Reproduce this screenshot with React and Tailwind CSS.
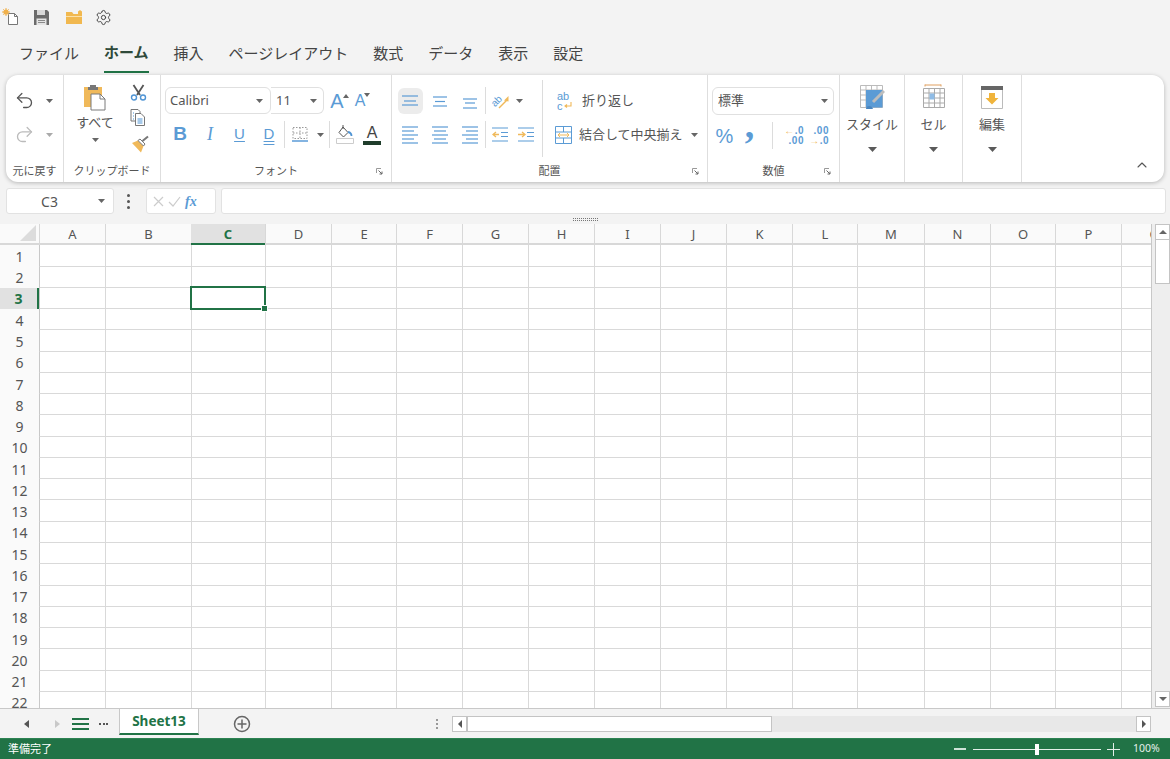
import { ChevronUp, Settings, Undo2, Redo2 } from "lucide-react";

const FONT = "font-['Noto_Sans','Noto_Sans_CJK_JP',sans-serif]";

const TABS = ["ファイル", "ホーム", "挿入", "ページレイアウト", "数式", "データ", "表示", "設定"];
const COLS = ["A", "B", "C", "D", "E", "F", "G", "H", "I", "J", "K", "L", "M", "N", "O", "P", "Q"];
const ROWS = Array.from({ length: 22 }, (_, i) => i + 1);

/* ---------------- Small icons ---------------- */
const Caret = ({ color = "#666", className = "" }) => (
  <svg width="7" height="4" viewBox="0 0 7 4" className={className}>
    <path d="M0 0h7L3.500 4z" fill={color} />
  </svg>
);

const BigCaret = () => (
  <svg width="9" height="5" viewBox="0 0 9 5">
    <path d="M0 0h9L4.500 5z" fill="#5a5a5a" />
  </svg>
);

const NewFile = () => (
  <svg width="18" height="18" viewBox="0 0 18 18">
    <path d="M6.500 5.500h6l3 3v8h-9z" fill="#fff" stroke="#777" />
    <path d="M12.500 5.500v3h3" fill="none" stroke="#777" />
    <circle cx="4" cy="4" r="2.600" fill="#f0b04a" />
    <path d="M4 0v8M0 4h8M1.300 1.300l5.400 5.400M6.700 1.300L1.300 6.700" stroke="#f0b04a" />
  </svg>
);

const Save = () => (
  <svg width="17" height="17" viewBox="0 0 17 17">
    <path d="M1 1h13l2 2v13H1z" fill="#6b6b6b" />
    <path d="M4 1h8v5H4z" fill="#d8d8d8" />
    <path d="M3.500 9.500h10V16h-10z" fill="#e4e4e4" />
    <path d="M5 11.500h7M5 13.500h7" stroke="#8a8a8a" />
  </svg>
);

const Folder = () => (
  <svg width="18" height="16" viewBox="0 0 18 16">
    <path d="M1 3h6l1.500 2H13V2.500L15 1l2 1.500V5v10H1z" fill="#f1b84f" />
    <path d="M1 7h16v1H1z" fill="#fbe0a8" />
  </svg>
);

const Clipboard = () => (
  <svg width="22" height="27" viewBox="0 0 22 27">
    <path d="M0 3h18v20H0z" fill="#f0b95a" />
    <path d="M6 3h6V1H6z" fill="#777" />
    <path d="M4 3h10v3H4z" fill="#777" />
    <path d="M7 10h9l5 5v11H7z" fill="#fff" stroke="#7a7a7a" />
    <path d="M16 10v5h5" fill="none" stroke="#7a7a7a" />
  </svg>
);

const ScissorsIcon = () => (
  <svg width="17" height="17" viewBox="0 0 17 17">
    <path d="M3.500 1l6.500 10M13.500 1L7 11" stroke="#555" strokeWidth="1.800" fill="none" />
    <circle cx="4" cy="13.500" r="2.500" fill="none" stroke="#4f94d4" strokeWidth="1.400" />
    <circle cx="13" cy="13.500" r="2.500" fill="none" stroke="#4f94d4" strokeWidth="1.400" />
  </svg>
);

const CopyIcon = () => (
  <svg width="16" height="17" viewBox="0 0 16 17">
    <path d="M1 .5h7l2 2V12H1z" fill="#fff" stroke="#777" />
    <path d="M5.500 4.500H11l3.500 3.500v8.500h-9z" fill="#fff" stroke="#777" />
    <path d="M3 4h1M3 7h1M3 10h1" stroke="#4f94d4" />
    <path d="M7.500 10h5M7.500 12h5M7.500 14h5" stroke="#4f94d4" />
  </svg>
);

const BrushIcon = () => (
  <svg width="18" height="18" viewBox="0 0 18 18">
    <path d="M0 8l6-2.500L11.500 11 9 17.500z" fill="#f0b95a" />
    <path d="M6 5.500L11.500 11l1.500-2L8 4z" fill="#fff" stroke="#777" />
    <path d="M10.500 6L16 1.500" stroke="#777" strokeWidth="2" />
  </svg>
);

const BorderIcon = () => (
  <svg width="16" height="17" viewBox="0 0 16 17">
    <path d="M1 1.500h14v11H1zM8 1.500v11M1 7h14" fill="none" stroke="#999" strokeDasharray="1.500 1.500" />
    <path d="M0 15h16" stroke="#4f94d4" strokeWidth="1.400" />
  </svg>
);

const FillIcon = () => (
  <svg width="18" height="19" viewBox="0 0 18 19">
    <path d="M7 2l5 5.500L7.500 12 3 7.500z" fill="#fff" stroke="#555" />
    <path d="M7 0v4" stroke="#555" />
    <path d="M12 7c2.500.500 3.500 2 3.500 4" fill="none" stroke="#4f94d4" strokeWidth="1.800" />
    <path d="M.5 13.500h17v5H.5z" fill="#fff" stroke="#ccc" />
  </svg>
);

const AlignLines = ({ lines, color = "#5b9bd5" }) => (
  <svg width="18" height="18" viewBox="0 0 18 18">
    {lines.map(([x1, x2, y]) => (
      <path key={y} d={`M${x1} ${y}H${x2}`} stroke={color} strokeWidth="1.200" />
    ))}
  </svg>
);

const OrientIcon = () => (
  <svg width="20" height="20" viewBox="0 0 20 20">
    <text x="1" y="13" transform="rotate(-45 7 10)" fontSize="10" fill="#5b9bd5" fontFamily="Liberation Sans">ab</text>
    <path d="M9 17L17 9" stroke="#f0b95a" strokeWidth="1.500" />
    <path d="M18.500 5v5.500l-4.500-1z" fill="#f0b95a" />
  </svg>
);

const IndentIcon = ({ right }) => (
  <svg width="16" height="16" viewBox="0 0 16 16">
    <path d="M0 1h16M9 5.500h7M9 9.500h7M0 14h16" stroke="#5b9bd5" strokeWidth="1.200" />
    {right ? (
      <path d="M0 7.500h6M4 5l3 2.500L4 10" stroke="#f0b95a" strokeWidth="1.300" fill="none" />
    ) : (
      <path d="M1 7.500h6M4 5L1 7.500 4 10" stroke="#f0b95a" strokeWidth="1.300" fill="none" />
    )}
  </svg>
);

const WrapIcon = () => (
  <svg width="16" height="20" viewBox="0 0 16 20">
    <text x="0" y="8.500" fontSize="11" fill="#5b9bd5" fontFamily="Liberation Sans">ab</text>
    <text x="0" y="18.500" fontSize="11" fill="#5b9bd5" fontFamily="Liberation Sans">c</text>
    <path d="M14 11v4H8.500M10 13.500L8 15l2 1.500" stroke="#f0b95a" strokeWidth="1.100" fill="none" />
  </svg>
);

const MergeIcon = () => (
  <svg width="17" height="18" viewBox="0 0 17 18">
    <path d="M.5.500h16v17H.5z" fill="none" stroke="#5b9bd5" />
    <path d="M.5 6h16M.5 12h16M8.500.500V6M8.500 12v5.500" stroke="#5b9bd5" />
    <path d="M3 9h11M5 7l-2 2 2 2M12 7l2 2-2 2" stroke="#f0b95a" fill="none" />
  </svg>
);

const Launcher = () => (
  <svg width="7" height="7" viewBox="0 0 7 7">
    <path d="M.5 5V.5H5" stroke="#999" fill="none" />
    <path d="M2.500 2.500L6 6M6 3.500V6H3.500" stroke="#666" fill="none" />
  </svg>
);

const StyleIcon = () => (
  <svg width="26" height="26" viewBox="0 0 26 26">
    <path d="M1.500 1.500h22v22h-22zM1.500 6h22M1.500 11h22M1.500 16h22M7 1.500v22M12.500 1.500v22M18 1.500v22" fill="none" stroke="#bbb" />
    <path d="M7 6h16.500v17.500H7z" fill="#5b9bd5" />
    <path d="M7 25c0-4 6-4 7 0z" fill="#4a86c0" />
    <path d="M14 18L25 7" stroke="#bdbdbd" strokeWidth="3" />
  </svg>
);

const CellIcon = () => (
  <svg width="24" height="26" viewBox="0 0 24 26">
    <path d="M3 1h16M3 .5v2M19 .5v2" stroke="#e0a060" />
    <path d="M1.500 4.500h21v19h-21zM1.500 9h21M1.500 14h21M1.500 19h21M7 4.500v19M12.500 4.500v19M18 4.500v19" fill="none" stroke="#aaa" />
    <path d="M7.500 9.500h5v6h-5z" fill="#8fbce6" />
  </svg>
);

const EditIcon = () => (
  <svg width="22" height="23" viewBox="0 0 22 23">
    <path d="M.5.500h21v22H.5z" fill="#fff" stroke="#bbb" />
    <path d="M0 0h22v4H0z" fill="#666" />
    <path d="M8 7h6v5h3.500L11 18.500 4.500 12H8z" fill="#f0b43c" />
  </svg>
);

/* ---------------- Ribbon parts ---------------- */
const Divider = () => <div className="w-px h-[27px] bg-[#dcdcdc]" />;

const Cell = ({ className = "w-[30px]", children }) => (
  <div className={`${className} h-[27px] flex items-center justify-center shrink-0`}>{children}</div>
);

const GroupLabel = ({ text, launcher }) => (
  <div className="h-[22px] flex items-center justify-center relative text-[11px] text-[#555]">
    {text}
    {launcher && (
      <span className="absolute right-[8px] top-[8px] flex">
        <Launcher />
      </span>
    )}
  </div>
);

const BigButton = ({ className, icon, label }) => (
  <div className={`${className} h-full border-r border-[#dedede] flex flex-col items-center pt-[9px] shrink-0`}>
    <div className="h-[26px] flex items-center">{icon}</div>
    <div className="mt-[5px] h-[18px] leading-[18px] text-[13px] text-[#555]">{label}</div>
    <div className="mt-[14px]">
      <BigCaret />
    </div>
  </div>
);

const Ribbon = () => (
  <div className="mx-[6px] h-[107px] shrink-0 rounded-xl bg-white shadow-[0_1px_4px_rgba(0,0,0,0.25)] flex">
    {/* Undo */}
    <div className="w-[58px] border-r border-[#dedede] flex flex-col shrink-0">
      <div className="flex-1 pt-[12px] pl-[8px] flex flex-col gap-[7px]">
        <div className="h-[27px] flex items-center gap-[11px]">
          <Undo2 className="w-[21px] h-[21px] text-[#555]" strokeWidth={1.5} />
          <Caret />
        </div>
        <div className="h-[27px] flex items-center gap-[11px]">
          <Redo2 className="w-[21px] h-[21px] text-[#bbb]" strokeWidth={1.5} />
          <Caret color="#aaa" />
        </div>
      </div>
      <GroupLabel text="元に戻す" />
    </div>

    {/* Clipboard */}
    <div className="w-[97px] border-r border-[#dedede] flex flex-col shrink-0">
      <div className="flex-1 flex">
        <div className="w-[62px] flex flex-col items-center pt-[9px]">
          <Clipboard />
          <div className="mt-[1px] text-[13px] leading-[20px] text-[#555]">すべて</div>
          <div className="mt-[6px]">
            <Caret />
          </div>
        </div>
        <div className="flex-1 flex flex-col items-center pt-[9px] pr-[10px] gap-[8px]">
          <ScissorsIcon />
          <CopyIcon />
          <div className="ml-[5px] mt-[1px]">
            <BrushIcon />
          </div>
        </div>
      </div>
      <GroupLabel text="クリップボード" />
    </div>

    {/* Font */}
    <div className="w-[231px] border-r border-[#dedede] flex flex-col shrink-0">
      <div className="flex-1 pt-[12px] pl-[4px] flex flex-col gap-[7px]">
        <div className="h-[27px] flex items-center">
          <div className="w-[106px] h-[27px] border border-[#e0e0e0] rounded-md px-[4px] flex items-center justify-between text-[13px] text-[#555]">
            Calibri
            <Caret className="mr-[3px]" />
          </div>
          <div className="w-[53px] h-[27px] border border-l-0 border-[#e0e0e0] rounded-r-md pl-[5px] flex items-center justify-between text-[13px] text-[#555]">
            11
            <Caret className="mr-[6px]" />
          </div>
          <div className="w-[26px] text-center text-[20px] leading-none text-[#5b9bd5] font-['Liberation_Sans',sans-serif] relative">
            A
            <span className="absolute right-[1px] top-[3px] border-x-[3px] border-x-transparent border-b-[4px] border-b-[#666]" />
          </div>
          <div className="w-[22px] -ml-[1px] text-center text-[16px] leading-none text-[#5b9bd5] font-['Liberation_Sans',sans-serif] relative">
            A
            <span className="absolute right-[1px] top-[0px] border-x-[3px] border-x-transparent border-t-[4px] border-t-[#666]" />
          </div>
        </div>
        <div className="h-[27px] flex items-center font-['Liberation_Sans',sans-serif] text-[#5b9bd5]">
          <Cell><span className="text-[19px] font-bold">B</span></Cell>
          <Cell><span className="text-[18px] italic font-['Liberation_Serif',serif]">I</span></Cell>
          <Cell className="w-[29px]"><span className="text-[15px] underline underline-offset-2">U</span></Cell>
          <Cell><span className="text-[15px] underline decoration-double underline-offset-2">D</span></Cell>
          <Divider />
          <Cell><BorderIcon /></Cell>
          <Cell className="w-[10px]"><Caret /></Cell>
          <div className="ml-[4px]"><Divider /></div>
          <Cell className="w-[30px]"><FillIcon /></Cell>
          <div className="w-[24px] h-[20px] flex flex-col items-center">
            <span className="text-[16px] leading-[15px] text-[#444]">A</span>
            <span className="w-[18px] h-[4px] mt-px bg-[#1f3d2b]" />
          </div>
        </div>
      </div>
      <GroupLabel text="フォント" launcher />
    </div>

    {/* Alignment */}
    <div className="w-[316px] border-r border-[#dedede] flex flex-col shrink-0">
      <div className="flex-1 flex pt-[12px] relative">
        <div className="w-[150px] pl-[3px] flex flex-col gap-[7px] shrink-0">
          <div className="h-[27px] flex items-center">
            <Cell>
              <div className="w-[25px] h-[26px] rounded-md bg-[#ececec] flex items-center justify-center">
                <AlignLines lines={[[1, 17, 4], [3, 15, 9], [1, 17, 13]]} />
              </div>
            </Cell>
            <Cell><AlignLines lines={[[2, 16, 5], [4, 14, 9.500], [2, 16, 14]]} /></Cell>
            <Cell><AlignLines lines={[[2, 16, 7], [4, 14, 11], [2, 16, 16]]} /></Cell>
            <Divider />
            <Cell className="w-[28px]"><OrientIcon /></Cell>
            <Cell className="w-[10px]"><Caret /></Cell>
          </div>
          <div className="h-[27px] flex items-center">
            <Cell><AlignLines lines={[[1, 17, 1], [1, 13, 5], [1, 17, 9], [1, 13, 13], [1, 17, 17]]} /></Cell>
            <Cell><AlignLines lines={[[1, 17, 1], [3, 15, 5], [1, 17, 9], [3, 15, 13], [1, 17, 17]]} /></Cell>
            <Cell><AlignLines lines={[[1, 17, 1], [5, 17, 5], [1, 17, 9], [5, 17, 13], [1, 17, 17]]} /></Cell>
            <Divider />
            <Cell className="w-[27px]"><IndentIcon /></Cell>
            <Cell className="w-[26px]"><IndentIcon right /></Cell>
          </div>
        </div>
        <div className="w-px h-[77px] -mt-[7px] bg-[#dcdcdc]" />
        <div className="flex-1 pl-[12px] flex flex-col gap-[7px] text-[13px] text-[#555]">
          <div className="h-[27px] flex items-center">
            <div className="ml-[2px]"><WrapIcon /></div>
            <span className="ml-[9px]">折り返し</span>
          </div>
          <div className="h-[27px] flex items-center">
            <MergeIcon />
            <span className="ml-[7px]">結合して中央揃え</span>
            <Caret className="ml-[8px]" />
          </div>
        </div>
      </div>
      <GroupLabel text="配置" launcher />
    </div>

    {/* Number */}
    <div className="w-[132px] border-r border-[#dedede] flex flex-col shrink-0">
      <div className="flex-1 pt-[12px] px-[4px] flex flex-col gap-[7px]">
        <div className="w-[122px] h-[28px] border border-[#e0e0e0] rounded-md px-[5px] flex items-center justify-between text-[13px] text-[#555]">
          標準
          <Caret />
        </div>
        <div className="h-[27px] flex items-center font-['Liberation_Sans',sans-serif] text-[#5b9bd5]">
          <Cell className="w-[25px]"><span className="text-[20px]">%</span></Cell>
          <Cell className="w-[25px]"><span className="text-[38px] font-bold leading-none -mt-[22px] font-['Liberation_Serif',serif]">,</span></Cell>
          <Cell className="w-[10px]"><span /></Cell>
          <Divider />
          <div className="w-[20px] ml-[11px] flex flex-col text-[10px] font-bold leading-[10px] text-right tracking-[0.5px]">
            <span><span className="text-[#f0b95a]">←</span>.0</span>
            <span>.00</span>
          </div>
          <div className="w-[20px] ml-[5px] flex flex-col text-[10px] font-bold leading-[10px] text-right tracking-[0.5px]">
            <span>.00</span>
            <span><span className="text-[#f0b95a]">→</span>.0</span>
          </div>
        </div>
      </div>
      <GroupLabel text="数値" launcher />
    </div>

    <BigButton className="w-[65px]" icon={<StyleIcon />} label="スタイル" />
    <BigButton className="w-[58px]" icon={<CellIcon />} label="セル" />
    <BigButton className="w-[59px]" icon={<EditIcon />} label="編集" />

    <div className="flex-1 flex items-end justify-end pr-[14px] pb-[9px]">
      <ChevronUp className="w-[16px] h-[16px] text-[#555]" strokeWidth={1.6} />
    </div>
  </div>
);

/* ---------------- Sheet grid ---------------- */
const SheetGrid = () => (
  <div className="relative w-[1152px] h-full overflow-hidden border-r border-[#c8c8c8] bg-white">
    <div className="grid grid-cols-[39px_66px_86px_74px_66px_65px_66px_66px_66px_66px_66px_66px_65px_67px_66px_65px_66px_66px] auto-rows-[21.27px]">
      <div className="h-[21.27px] bg-[#fafafa] border-b-2 border-[#d8d8d8] flex items-end justify-end pr-[3px] pb-[2px]">
        <span className="border-l-[16px] border-l-transparent border-b-[16px] border-b-[#dcdcdc]" />
      </div>
      {COLS.map((c) => (
        <div
          key={c}
          className={
            c === "C"
              ? "bg-[#e1e1e1] border-b-2 border-[#217346] text-[#217346] font-bold flex items-center justify-center pt-[2px] text-[13px]"
              : "bg-[#fafafa] border-l border-b-2 border-[#d8d8d8] text-[#555] flex items-center justify-center pt-[2px] text-[13px]"
          }
        >
          {c}
        </div>
      ))}
      {ROWS.map((r) => (
        <Row key={r} r={r} />
      ))}
    </div>
    <div className="absolute left-[190px] top-[62px] w-[76px] h-[24px] border-2 border-[#217346]" />
    <div className="absolute left-[261px] top-[81px] w-[7px] h-[7px] bg-[#217346] border border-white" />
  </div>
);

const Row = ({ r }) => (
  <>
    <div
      className={
        r === 3
          ? "bg-[#e1e1e1] border-r-2 border-[#217346] text-[#217346] font-bold flex items-center justify-center pt-[1px] text-[14px]"
          : "bg-[#fafafa] text-[#555] flex items-center justify-center pt-[1px] text-[14px]"
      }
    >
      {r}
    </div>
    {COLS.map((c) => (
      <div
        key={c}
        className={
          c === "A"
            ? "border-l border-b border-l-[#c8c8c8] border-b-[#d9d9d9]"
            : "border-l border-b border-[#d9d9d9]"
        }
      />
    ))}
  </>
);

const ScrollButton = ({ dir }) => (
  <div className="w-[15px] h-[16px] bg-white border border-[#c4c4c4] flex items-center justify-center shrink-0">
    <svg width="8" height="8" viewBox="0 0 8 8">
      {dir === "up" && <path d="M0 6h8L4 2z" fill="#666" />}
      {dir === "down" && <path d="M0 2h8L4 6z" fill="#666" />}
      {dir === "left" && <path d="M6 0v8L2 4z" fill="#555" />}
      {dir === "right" && <path d="M2 0v8l4-4z" fill="#555" />}
    </svg>
  </div>
);

export default function App() {
  return (
    <div className={`${FONT} w-[1170px] h-[759px] bg-[#f3f3f3] overflow-hidden flex flex-col`}>
      {/* Quick access */}
      <div className="h-[34px] shrink-0 flex items-center pl-[2px]">
        <NewFile />
        <div className="ml-[13px]"><Save /></div>
        <div className="ml-[15px]"><Folder /></div>
        <Settings className="ml-[12px] w-[17px] h-[17px] text-[#444]" strokeWidth={1.4} />
      </div>

      {/* Tabs */}
      <div className="h-[39px] shrink-0 flex gap-[25px] pl-[19px] text-[15px] text-[#444]">
        {TABS.map((t) => (
          <div
            key={t}
            className={
              t === "ホーム"
                ? "h-full flex items-center border-b-2 border-[#217346] font-bold text-[#2f4a3a]"
                : "h-full flex items-center"
            }
          >
            {t}
          </div>
        ))}
      </div>

      <div className="h-[2px] shrink-0" />
      <Ribbon />

      {/* Formula bar */}
      <div className="mt-[6px] mr-[4px] ml-[6px] h-[26px] shrink-0 flex items-stretch">
        <div className="w-[108px] bg-white border border-[#e2e2e2] rounded-[3px] flex items-center text-[14px] text-[#555]">
          <span className="flex-1 text-center pr-[6px]">C3</span>
          <Caret className="mr-[8px]" />
        </div>
        <div className="w-[32px] flex flex-col items-center justify-center gap-[3px] pr-[4px]">
          <span className="w-[3px] h-[3px] rounded-full bg-[#555]" />
          <span className="w-[3px] h-[3px] rounded-full bg-[#555]" />
          <span className="w-[3px] h-[3px] rounded-full bg-[#555]" />
        </div>
        <div className="w-[70px] bg-white border border-[#e2e2e2] rounded-[3px] flex items-center pl-[6px] gap-[4px]">
          <svg width="11" height="11" viewBox="0 0 11 11">
            <path d="M1 1l9 9M10 1l-9 9" stroke="#ccc" strokeWidth="1.200" />
          </svg>
          <svg width="13" height="11" viewBox="0 0 13 11">
            <path d="M1 6l4 4 7-9" stroke="#ccc" strokeWidth="1.200" fill="none" />
          </svg>
          <span className="text-[14px] italic font-bold text-[#5b9bd5] font-['Liberation_Serif',serif]">fx</span>
        </div>
        <div className="ml-[5px] flex-1 bg-white border border-[#e2e2e2] rounded-[3px]" />
      </div>

      {/* Splitter */}
      <div className="h-[10px] shrink-0 flex items-center justify-center">
        <span className="w-[25px] h-[3px] border-y border-dotted border-[#777]" />
      </div>

      {/* Grid + vertical scrollbar */}
      <div className="flex-1 min-h-0 flex border-b border-[#c8c8c8]">
        <SheetGrid />
        <div className="flex-1 bg-[#eeeeee] flex flex-col items-end">
          <ScrollButton dir="up" />
          <div className="w-[15px] h-[44px] bg-white border-x border-b border-[#c4c4c4]" />
          <div className="flex-1" />
          <ScrollButton dir="down" />
          <div className="h-px" />
        </div>
      </div>

      {/* Sheet tabs */}
      <div className="h-[29px] shrink-0 flex items-center">
        <div className="w-[119px] flex items-center shrink-0">
          <svg width="8" height="10" viewBox="0 0 8 10" className="ml-[23px]">
            <path d="M6 1v8L1 5z" fill="#555" />
          </svg>
          <svg width="8" height="10" viewBox="0 0 8 10" className="ml-[22px]">
            <path d="M2 1v8l5-4z" fill="#c8c8c8" />
          </svg>
          <div className="ml-[11px] w-[17px] flex flex-col gap-[3px]">
            <span className="h-[2px] bg-[#217346]" />
            <span className="h-[2px] bg-[#217346]" />
            <span className="h-[2px] bg-[#217346]" />
          </div>
          <div className="ml-[10px] flex gap-[1.500px]">
            <span className="w-[2px] h-[2px] bg-[#555]" />
            <span className="w-[2px] h-[2px] bg-[#555]" />
            <span className="w-[2px] h-[2px] bg-[#555]" />
          </div>
        </div>
        <div className="w-[80px] h-[26px] -mt-[3px] bg-white border-x border-b-2 border-x-[#c8c8c8] border-b-[#217346] flex items-center justify-center text-[13.5px] font-bold text-[#217346]">
          Sheet13
        </div>
        <svg width="18" height="18" viewBox="0 0 18 18" className="ml-[34px]">
          <circle cx="9" cy="9" r="7.500" fill="none" stroke="#666" strokeWidth="1.500" />
          <path d="M9 4.500v9M4.500 9h9" stroke="#666" strokeWidth="1.500" />
        </svg>
        <div className="ml-[185px] flex flex-col gap-[2px]">
          <span className="w-[2px] h-[2px] bg-[#999]" />
          <span className="w-[2px] h-[2px] bg-[#999]" />
          <span className="w-[2px] h-[2px] bg-[#999]" />
        </div>
        <div className="ml-[14px] w-[699px] h-[16px] bg-[#e8e8e8] flex items-center">
          <ScrollButton dir="left" />
          <div className="w-[305px] h-[16px] bg-white border border-[#c4c4c4]" />
          <div className="flex-1" />
          <ScrollButton dir="right" />
        </div>
      </div>

      {/* Status bar */}
      <div className="h-[21px] shrink-0 bg-[#217346] border-t border-[#2c8252] flex items-center pl-[8px] text-[11px] text-white">
        <span>準備完了</span>
        <div className="ml-auto flex items-center">
          <span className="w-[12px] h-[2px] bg-[#cfe3d8]" />
          <div className="ml-[7px] w-[128px] h-px bg-[#e4efe9] flex items-center">
            <span className="ml-[62px] w-[4px] h-[11px] bg-white" />
          </div>
          <svg width="13" height="13" viewBox="0 0 13 13" className="ml-[6px]">
            <path d="M0 6.500h13M6.500 0v13" stroke="#e4efe9" />
          </svg>
          <span className="ml-[13px] w-[37px] text-[10.5px] text-[#e4efe9]">100%</span>
        </div>
      </div>
    </div>
  );
}
